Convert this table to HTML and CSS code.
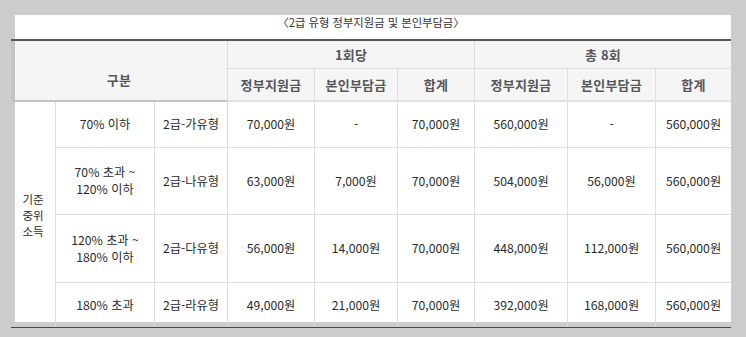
FILE: index.html
```html
<!DOCTYPE html>
<html lang="ko">
<head>
<meta charset="utf-8">
<link rel="stylesheet" href="styles.css">
</head>
<body>
<div class="page">
  <div class="panel">
    <div class="title">〈2급 유형 정부지원금 및 본인부담금〉</div>
    <div class="grid">
      <div class="th gubun">구분</div>
      <div class="th group">1회당</div>
      <div class="th group last">총 8회</div>
      <div class="th sub">정부지원금</div>
      <div class="th sub">본인부담금</div>
      <div class="th sub">합계</div>
      <div class="th sub">정부지원금</div>
      <div class="th sub">본인부담금</div>
      <div class="th sub last">합계</div>

      <div class="td side">기준<br>중위<br>소득</div>

      <div class="td r1">70% 이하</div>
      <div class="td r1">2급-가유형</div>
      <div class="td r1">70,000원</div>
      <div class="td r1">-</div>
      <div class="td r1">70,000원</div>
      <div class="td r1">560,000원</div>
      <div class="td r1">-</div>
      <div class="td r1 last">560,000원</div>

      <div class="td r2">70% 초과 ~<br>120% 이하</div>
      <div class="td r2">2급-나유형</div>
      <div class="td r2">63,000원</div>
      <div class="td r2">7,000원</div>
      <div class="td r2">70,000원</div>
      <div class="td r2">504,000원</div>
      <div class="td r2">56,000원</div>
      <div class="td r2 last">560,000원</div>

      <div class="td r3">120% 초과 ~<br>180% 이하</div>
      <div class="td r3">2급-다유형</div>
      <div class="td r3">56,000원</div>
      <div class="td r3">14,000원</div>
      <div class="td r3">70,000원</div>
      <div class="td r3">448,000원</div>
      <div class="td r3">112,000원</div>
      <div class="td r3 last">560,000원</div>

      <div class="td r4 end">180% 초과</div>
      <div class="td r4 end">2급-라유형</div>
      <div class="td r4 end">49,000원</div>
      <div class="td r4 end">21,000원</div>
      <div class="td r4 end">70,000원</div>
      <div class="td r4 end">392,000원</div>
      <div class="td r4 end">168,000원</div>
      <div class="td r4 end last">560,000원</div>
    </div>
  </div>
</div>
</body>
</html>
```

FILE: styles.css
```css
* { box-sizing: border-box; }
html, body { margin: 0; padding: 0; }
body {
  background: #cccccc;
  font-family: "Noto Sans CJK KR", "Noto Sans", sans-serif;
  color: #333;
}
.page {
  padding: 15px 15px 0 15px;
  height: 337px;
}
.panel {
  background: #ffffff;
  width: 716px;
  height: 307px;
}
.title {
  height: 24px;
  margin-left: -4px;
  width: 720px;
  text-align: center;
  font-size: 11.3px;
  line-height: 14px;
  color: #333;
}
.grid {
  margin-left: -4px;
  width: 720px;
  display: grid;
  grid-template-columns: 45px 99px 73px 87px 83px 77px 93px 88px 75px;
  grid-template-rows: 28px 33px 46px 67px 68px 44px;
  border-top: 2px solid #55585e;
  border-bottom: 1px solid #45484e;
}
.th, .td {
  display: flex;
  align-items: center;
  justify-content: center;
  text-align: center;
  border-right: 1px solid #dedede;
  border-bottom: 1px solid #dedede;
}
.last { border-right: 0; }
.th {
  background: rgba(0, 0, 0, 0.04);
  color: #55565c;
  font-weight: bold;
  font-size: 13px;
  letter-spacing: 0.2px;
}
.gubun {
  grid-column: 1 / 4;
  grid-row: 1 / 3;
  border-bottom: 2px solid #c2c2c2;
  padding-top: 17px;
}
.group {
  grid-column: span 3;
}
.sub {
  border-bottom: 2px solid #e2e2e2;
}
.td {
  font-size: 12.2px;
  line-height: 17px;
  color: #2a2a2a;
}
.side {
  grid-column: 1;
  grid-row: 3 / 7;
  font-size: 11.5px;
  line-height: 16px;
  border-bottom: 0;
}
.end { border-bottom: 0; }
```
